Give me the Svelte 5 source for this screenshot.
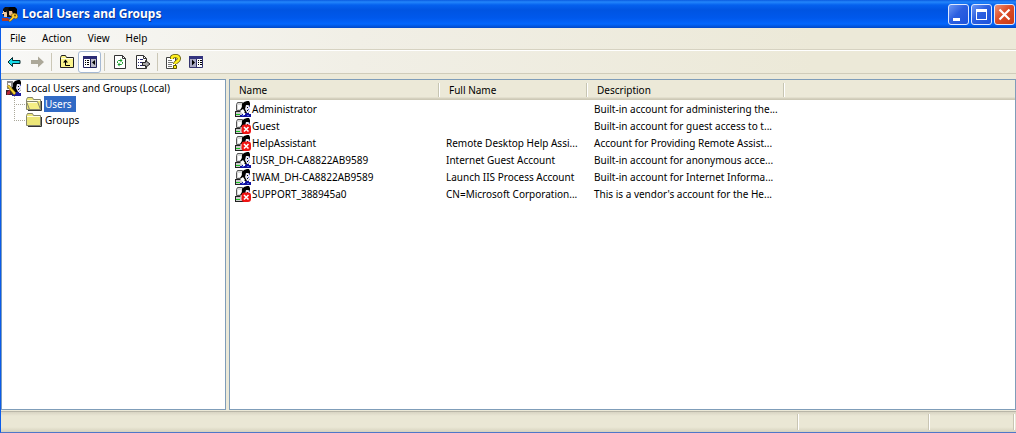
<script lang="ts">
  type User = { name: string; fullName: string; description: string; disabled?: boolean };

  const menus = ['File', 'Action', 'View', 'Help'];

  const users: User[] = [
    { name: 'Administrator', fullName: '', description: 'Built-in account for administering the...' },
    { name: 'Guest', fullName: '', description: 'Built-in account for guest access to t...', disabled: true },
    { name: 'HelpAssistant', fullName: 'Remote Desktop Help Assi...', description: 'Account for Providing Remote Assist...', disabled: true },
    { name: 'IUSR_DH-CA8822AB9589', fullName: 'Internet Guest Account', description: 'Built-in account for anonymous acce...' },
    { name: 'IWAM_DH-CA8822AB9589', fullName: 'Launch IIS Process Account', description: 'Built-in account for Internet Informa...' },
    { name: 'SUPPORT_388945a0', fullName: 'CN=Microsoft Corporation...', description: "This is a vendor's account for the He...", disabled: true }
  ];

  let selected = $state('Users');
</script>

{#snippet head()}
  <path d="M5 9l2-3V3l2-2 3-1h2l1 2v8l-2 2H9z" fill="#000" />
  <path d="M11 4h2l2 1v5l-2 2h-1l-2-4z" fill="#e8e8f4" />
  <path d="M12 6h1v1h-1zM12 9h1v1h-1z" fill="#000" />
  <path d="M14 5h1v1h-1zM13 8h1v1h-1z" fill="#5560d8" />
{/snippet}

{#snippet userIcon(disabled = false)}
  <svg class="icon" viewBox="0 0 16 16" aria-hidden="true">
    <path d="M1.500 3.500l1-2h5v8h-6z" fill="#d8d8d8" stroke="#555" />
    <path d="M3 4h3v4H3z" fill="#fff" />
    <path d="M0 11h9v4H0z" fill="#ccc" />
    <path d="M0 15h9v1H0zM0 10h7v1H0zM0 10h1v6H0z" fill="#222" />
    <path d="M1 13h4v1H1z" fill="#17c520" />
    {@render head()}
    <path d="M5 10l3-2 2 3-2 2z" fill="#fff" />
    {#if disabled}
      <rect x="6.500" y="6.500" width="9.500" height="9.500" rx="3" fill="#f01414" />
      <path d="M9 9l4.500 4.500m0-4.500L9 13.500" stroke="#fff" stroke-width="1.600" />
    {:else}
      <path d="M7 13h2l2-1h3v1h2v3H5v-2h2z" fill="#10109c" />
      <path d="M8 12h2v2H8z" fill="#fff" />
      <path d="M7 14h2v1H7zM12 14h2v1h-2z" fill="#4d66e8" />
    {/if}
  </svg>
{/snippet}

{#snippet folder(open = false)}
  <svg class="icon" viewBox="0 0 16 16" aria-hidden="true">
    <path d="M.5 13.500v-10l1-2h5l1 2h7v10z" fill="#ece678" stroke="#85856c" />
    <path d="M1 4.500h13" stroke="#fffde0" />
    {#if open}
      <path d="M3.500 13.500L.5 5.500h11l3 8z" fill="#f5ee84" stroke="#85856c" />
      <path d="M1.500 6.500h9.500" stroke="#fffde0" />
    {/if}
    <path d="M2 14.500h13.500V5" fill="none" stroke="#333" />
  </svg>
{/snippet}

<div class="window">
  <header class="title-bar">
    <svg class="icon" viewBox="0 0 16 16" aria-hidden="true">
      <path d="M1 3l2-2h6l2 2v6l-2 2H3L1 9z" fill="#111" />
      <path d="M1 5h3l1 2v4H2V8H0V7h1z" fill="#f2cba4" />
      <path d="M2 5h2v1H2z" fill="#000" />
      <path d="M0 12h6l2 3H0z" fill="#b23a25" />
      <path d="M6 3l2-2h5l2 2v6h-4l-2-3z" fill="#000" />
      <path d="M7 5h3l1 3-2 2-2-1z" fill="#e9b888" />
      <path d="M9 9l3-2 3 1 1 3-2 2-2-1-3 3-2 1v-2l3-3z" fill="#f7c72c" stroke="#6b4900" stroke-width=".5" />
      <circle cx="13" cy="9.500" r="1" fill="#704d00" />
    </svg>
    <h1>Local Users and Groups</h1>
    <div class="caption-buttons">
      <button aria-label="Minimize">
        <svg viewBox="0 0 19 19"><path d="M4 13h7v3H4z" fill="#fff" /></svg>
      </button>
      <button aria-label="Maximize">
        <svg viewBox="0 0 19 19"><path d="M4 4h11v11H4zM5 7v7h9V7z" fill="#fff" fill-rule="evenodd" /></svg>
      </button>
      <button class="close" aria-label="Close">
        <svg viewBox="0 0 19 19"><path d="M4.500 4.500l10 10m0-10l-10 10" stroke="#fff" stroke-width="2.200" /></svg>
      </button>
    </div>
  </header>

  <nav class="menu-bar">
    {#each menus as menu}
      <button>{menu}</button>
    {/each}
  </nav>

  <div class="toolbar">
    <button aria-label="Back">
      <svg class="icon" viewBox="0 0 16 16"><path d="M2 8l4.500-4.500v3H14v3H6.500v3z" fill="#16d9e6" stroke="#06282c" /></svg>
    </button>
    <button aria-label="Forward" disabled>
      <svg class="icon" viewBox="0 0 16 16"><path d="M15 8L9 2.500V6H2v4h7v3.500z" fill="#aca899" /></svg>
    </button>
    <span class="separator"></span>
    <button aria-label="Up one level">
      <svg class="icon" viewBox="0 0 16 16">
        <path d="M1.500 13.500v-10l1-2h4l1 2h7v10z" fill="#fbf58c" stroke="#222" />
        <path d="M2 4.500h12" stroke="#fffde0" />
        <path d="M6.500 7v4.500H11" fill="none" stroke="#000" />
        <path d="M4 8.500L6.500 5.500 9 8.500z" fill="#000" />
      </svg>
    </button>
    <button class="pressed" aria-label="Show or hide console tree">
      <svg class="icon" viewBox="0 0 16 16">
        <path d="M1.500 3.500h13v10h-13z" fill="#fff" stroke="#25255f" />
        <path d="M1 2h14v3H1z" fill="#2b2b75" />
        <path d="M9 5h5v8H9z" fill="#bdbdc8" />
        <path d="M8 5h1v8H8z" fill="#25255f" />
        <path d="M3 6h1v1H3zM5 6h2v1H5zM3 8h1v1H3zM5 8h2v1H5zM3 10h1v1H3zM5 10h2v1H5zM13 6v5l-3-2.500z" fill="#000" />
      </svg>
    </button>
    <span class="separator"></span>
    <button aria-label="Refresh">
      <svg class="icon" viewBox="0 0 16 16">
        <path d="M2.500 1.500h8l3 3v10h-11z" fill="#fff" stroke="#333" />
        <path d="M10.500 1.500v3h3" fill="none" stroke="#333" />
        <path d="M5.500 9V7.500l1-1H9M10.500 8v1.500l-1 1H7" fill="none" stroke="#159a27" />
        <path d="M8.500 4.500v4l2-2zM7.500 8.500v4l-2-2z" fill="#159a27" />
      </svg>
    </button>
    <button aria-label="Export list">
      <svg class="icon" viewBox="0 0 16 16">
        <path d="M1.500 1.500h7l3 3v10h-10z" fill="#fff" stroke="#333" />
        <path d="M8.500 1.500v3h3" fill="none" stroke="#333" />
        <path d="M3 5h1v1H3zM5 5h3v1H5zM3 8h1v1H3zM5 8h4v1H5zM3 11h1v1H3zM5 11h4v1H5z" fill="#26266e" />
        <path d="M7.500 8.500h3v-2L15 10l-4.500 3.500v-2h-3z" fill="#aaa" stroke="#222" />
      </svg>
    </button>
    <span class="separator"></span>
    <button aria-label="Help">
      <svg class="icon" viewBox="0 0 16 16">
        <path d="M1.500 3.500h9v11h-9z" fill="#fff" stroke="#444" />
        <path d="M3 6h4v1H3zM3 8h5v1H3zM3 10h4v1H3zM3 12h4v1H3z" fill="#777" />
        <path d="M7 5V3.500Q7.500 2 10.500 2T14 4.500Q14 6 12 7.500T10 10" fill="none" stroke="#5c5500" stroke-width="4" />
        <path d="M7 5V3.500Q7.500 2 10.500 2T14 4.500Q14 6 12 7.500T10 10" fill="none" stroke="#ffef20" stroke-width="2.400" />
        <path d="M8.500 11.500h3v3h-3z" fill="#ffef20" stroke="#5c5500" />
      </svg>
    </button>
    <button aria-label="Show or hide action pane">
      <svg class="icon" viewBox="0 0 16 16">
        <path d="M1.500 3.500h13v10h-13z" fill="#fff" stroke="#34346e" />
        <path d="M1 2h14v3H1z" fill="#34347f" />
        <path d="M2 5h6v8H2z" fill="#a9a9c2" />
        <path d="M8 5h1v8H8z" fill="#34346e" />
        <path d="M4 5.500v6L7 8.500zM10 6h1v1h-1zM12 6h2v1h-2zM10 8h1v1h-1zM12 8h2v1h-2zM10 10h1v1h-1zM12 10h2v1h-2z" fill="#000" />
      </svg>
    </button>
  </div>

  <main class="panes">
    <div class="tree pane">
      <div class="root">
        <svg class="icon" viewBox="0 0 16 16" aria-hidden="true">
          <path d="M1 1h6v5L4 9H1z" fill="#888" />
          <path d="M2 3h3v4H1V5h1z" fill="#fff" />
          <path d="M0 10h7v5H0z" fill="#3b252a" />
          {@render head()}
          <path d="M8 12h5v1h2v3H6v-2h2z" fill="#1a1a9a" />
          <path d="M1 6l2-1 7 8-2 2z" fill="#f2d336" stroke="#765600" stroke-width=".6" />
          <path d="M1 12l3-2v4l-3 1z" fill="#b82635" />
        </svg>
        <span>Local Users and Groups (Local)</span>
      </div>
      <ul>
        {#each ['Users', 'Groups'] as item}
          <li>
            <button class:selected={selected === item} onclick={() => (selected = item)}>
              {@render folder(selected === item)}
              <span>{item}</span>
            </button>
          </li>
        {/each}
      </ul>
    </div>

    <div class="list pane">
      <table>
        <thead>
          <tr>
            <th class="col-name">Name</th>
            <th class="col-full">Full Name</th>
            <th class="col-desc">Description</th>
            <td></td>
          </tr>
        </thead>
        <tbody>
          {#each users as user}
            <tr>
              <td class="name"><div>{@render userIcon(user.disabled)}{user.name}</div></td>
              <td>{user.fullName}</td>
              <td>{user.description}</td>
              <td></td>
            </tr>
          {/each}
        </tbody>
      </table>
    </div>
  </main>

  <footer class="status-bar">
    <span class="message"></span>
    <span class="progress"></span>
    <span class="info"></span>
  </footer>
</div>

<style>
  :global(body) {
    background: #ece9d8;
  }

  .window {
    min-height: 100vh;
    box-sizing: border-box;
    display: flex;
    flex-direction: column;
    border-left: 1px solid #0a5bea;
    border-bottom: 1px solid #4f77c8;
    background: #ece9d8;
    color: #000;
    font-family: Tahoma, 'Noto Sans', 'Open Sans', sans-serif;
    font-size: 10px;
    line-height: 16px;
    white-space: nowrap;
    cursor: default;
  }

  button {
    font: inherit;
    color: inherit;
    padding: 0;
    border: 0;
    background: none;
  }

  .icon {
    display: block;
    width: 16px;
    height: 16px;
    flex-shrink: 0;
  }

  .title-bar {
    display: flex;
    align-items: center;
    gap: 4px;
    height: 28px;
    margin-left: -1px;
    padding: 0 1px 0 2px;
    background: linear-gradient(#0a5be0 0, #2386fb 2px, #0561ee 5px, #0054e2 10px, #0058ec 18px, #0366fc 24px, #0148c8 28px);
    color: #fff;
  }

  .title-bar h1 {
    flex: 1;
    margin: 0;
    font-family: 'Noto Sans', 'Open Sans', sans-serif;
    font-size: 12px;
    font-weight: 700;
    text-shadow: 1px 1px #0b3490;
  }

  .caption-buttons {
    display: flex;
    gap: 2px;
  }

  .caption-buttons button {
    width: 21px;
    height: 21px;
    border: 1px solid #dfe9ff;
    border-radius: 3px;
    background: linear-gradient(135deg, #6d98f4, #2c5fe0 45%, #1c53dc);
  }

  .caption-buttons .close {
    background: linear-gradient(135deg, #ee9278, #dc4c27 45%, #c83b14);
  }

  .caption-buttons svg {
    display: block;
    width: 19px;
    height: 19px;
  }

  .menu-bar {
    display: flex;
    height: 21px;
    padding-left: 1px;
    border-bottom: 1px solid #d6d2c1;
    background: linear-gradient(90deg, #f8f8f6, #f1efe6 35%, #ece9d8 80%);
  }

  .menu-bar button {
    padding: 0 8px 2px;
  }

  .toolbar {
    display: flex;
    align-items: center;
    height: 22px;
    padding-left: 1px;
    border-top: 1px solid #fff;
    border-bottom: 1px solid #d0ccba;
    margin-bottom: 5px;
    background: linear-gradient(90deg, #f8f8f6, #f1efe6 35%, #ece9d8 80%);
  }

  .toolbar button {
    box-sizing: border-box;
    display: flex;
    align-items: center;
    justify-content: center;
    width: 23px;
    height: 22px;
  }

  .toolbar .pressed {
    border: 1px solid #a5b9d3;
    border-radius: 3px;
    background: #fff;
  }

  .separator {
    width: 1px;
    height: 18px;
    margin: 0 3px;
    background: #cbc7b6;
  }

  .panes {
    flex: 1;
    display: grid;
    grid-template-columns: 225px 1fr;
    gap: 3px;
  }

  .pane {
    border: 1px solid #7f9db9;
    background: #fff;
  }

  .tree {
    padding: 0 0 0 4px;
  }

  .root {
    display: flex;
    gap: 4px;
  }

  .tree ul {
    list-style: none;
    margin: 0 0 0 8px;
    padding: 0;
  }

  .tree li {
    display: flex;
    align-items: center;
    background:
      repeating-linear-gradient(#aaa89a 0 1px, #fff 1px 2px) 0 0 / 1px 100% no-repeat,
      repeating-linear-gradient(90deg, #aaa89a 0 1px, #fff 1px 2px) 0 8px / 12px 1px no-repeat;
  }

  .tree li:last-child {
    background-size: 1px 8px, 12px 1px;
  }

  .tree li button {
    display: flex;
    gap: 2px;
    margin-left: 12px;
  }

  .tree li span {
    padding: 0 4px 0 1px;
  }

  .tree .selected span {
    background: #316ac5;
    color: #fff;
  }

  table {
    width: 100%;
    table-layout: fixed;
    border-collapse: separate;
    border-spacing: 0;
  }

  thead th,
  thead td {
    height: 20px;
    padding: 0 9px 1px;
    box-sizing: border-box;
    background: linear-gradient(#ece9d8 17px, #d9d5c3 18px, #c9c5b2 20px);
    font-weight: 400;
    text-align: left;
  }

  thead th {
    background:
      linear-gradient(90deg, #c7c5b2 1px, #fff 1px) right 0 top 3px / 2px 14px no-repeat,
      linear-gradient(#ece9d8 17px, #d9d5c3 18px, #c9c5b2 20px);
  }

  .col-name {
    width: 210px;
  }

  .col-full {
    width: 148px;
  }

  .col-desc {
    width: 197px;
  }

  tbody td {
    height: 17px;
    padding: 0 6px;
  }

  tbody .name {
    padding: 0 5px;
  }

  .name div {
    display: flex;
    align-items: center;
    gap: 1px;
  }

  .status-bar {
    display: flex;
    gap: 2px;
    height: 20px;
    margin-top: 1px;
    padding: 0 2px 0 0;
    border-top: 1px solid #b9b6a8;
    background: linear-gradient(#d8d4c3, #eae7d5 4px 15px, #d5d1bd);
  }

  .status-bar span {
    border-right: 1px solid #c9c5b3;
    box-shadow: 1px 0 #fff;
    margin: 2px 0;
  }

  .message {
    flex: 1;
  }

  .progress {
    width: 128px;
  }

  .info {
    width: 82px;
  }
</style>
